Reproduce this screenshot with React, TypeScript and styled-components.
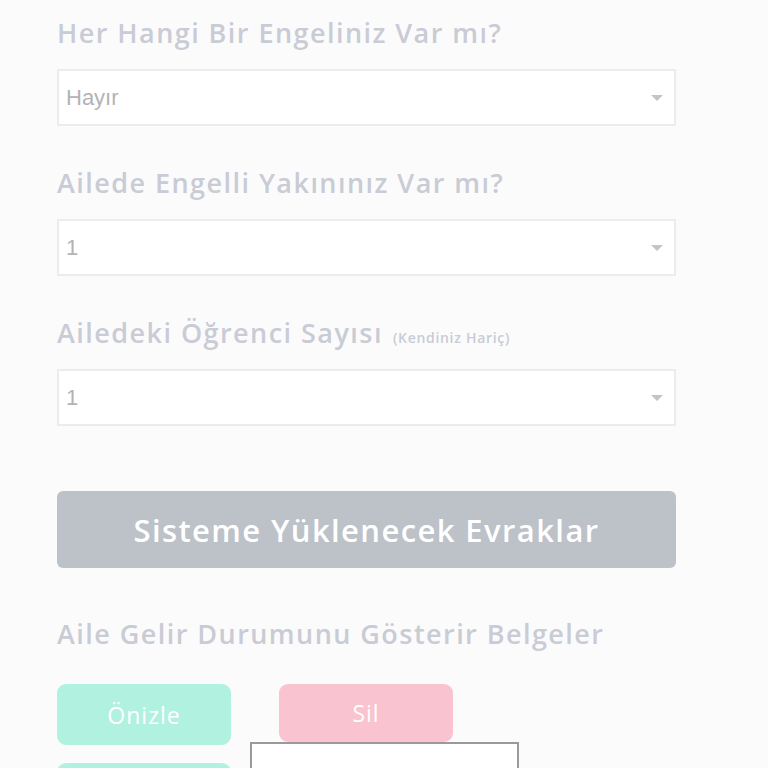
import React from "react"
import styled, { createGlobalStyle } from "styled-components"

const GlobalStyle = createGlobalStyle`
  html, body {
    margin: 0;
    padding: 0;
    background: #fbfbfc;
    overflow: hidden;
  }
`;

const Page = styled.div`
  width: 768px;
  height: 768px;
  overflow: hidden;
  box-sizing: border-box;
  padding: 14px 92px 0 57px;
  display: flex;
  flex-direction: column;
  font-family: "Open Sans", "Noto Sans", sans-serif;
`;

const Field = styled.div`
  display: flex;
  flex-direction: column;
  margin-bottom: 38px;
`;

const Heading = styled.h2`
  margin: 0 0 16px 0;
  height: 39px;
  flex-shrink: 0;
  display: flex;
  align-items: baseline;
  gap: 10px;
  font-size: 27px;
  font-weight: 600;
  letter-spacing: 1.45px;
  color: #c9cbd5;
  white-space: nowrap;
`;

const Hint = styled.span`
  font-size: 14px;
  font-weight: 600;
  letter-spacing: 0.7px;
  color: #c9cbd5;
`;

const SelectBox = styled.div`
  height: 57px;
  box-sizing: border-box;
  border: 2px solid #ececee;
  background: #ffffff;
  display: flex;
  align-items: center;
  justify-content: space-between;
  padding: 0 9px 0 7px;
  font-family: "Liberation Sans", Arial, sans-serif;
  font-size: 22px;
  color: #b3b3b5;
`;

const Caret = styled.span`
  width: 0;
  height: 0;
  border-left: 6px solid transparent;
  border-right: 6px solid transparent;
  border-top: 6px solid #c4c4c6;
  margin-right: 2px;
`;

const Banner = styled.div`
  margin-top: 27px;
  height: 77px;
  flex-shrink: 0;
  border-radius: 6px;
  background: #bdc1c8;
  color: #ffffff;
  display: flex;
  align-items: center;
  justify-content: center;
  font-size: 31px;
  font-weight: 600;
  letter-spacing: 1.4px;
`;

const SubHeading = styled(Heading)`
  margin: 47px 0 30px 0;
`;

const ButtonGrid = styled.div`
  position: relative;
  flex-shrink: 0;
  display: grid;
  grid-template-columns: 174px 174px;
  column-gap: 48px;
  row-gap: 18px;
`;

const ActionButton = styled.div<{ $tone: "preview" | "delete" }>`
  height: ${({ $tone }) => ($tone === "preview" ? "61px" : "58px")};
  border-radius: 9px;
  background: ${({ $tone }) => ($tone === "preview" ? "#b1f1e0" : "#f9c3cf")};
  color: #ffffff;
  display: flex;
  align-items: center;
  justify-content: center;
  font-size: 23px;
  font-weight: 500;
  letter-spacing: 1px;
`;

const FilePopup = styled.div`
  position: absolute;
  left: 193px;
  top: 58px;
  width: 269px;
  height: 60px;
  box-sizing: border-box;
  border: 2px solid #9a9a9a;
  background: #ffffff;
`;

const selects = [
  { label: "Her Hangi Bir Engeliniz Var mı?", value: "Hayır" },
  { label: "Ailede Engelli Yakınınız Var mı?", value: "1" },
  { label: "Ailedeki Öğrenci Sayısı", hint: "(Kendiniz Hariç)", value: "1" },
];

export default function App() {
  return (
    <>
      <GlobalStyle />
      <Page>
        {selects.map((s) => (
          <Field key={s.label}>
            <Heading>
              {s.label}
              {s.hint && <Hint>{s.hint}</Hint>}
            </Heading>
            <SelectBox>
              <span>{s.value}</span>
              <Caret />
            </SelectBox>
          </Field>
        ))}
        <Banner>Sisteme Yüklenecek Evraklar</Banner>
        <SubHeading>Aile Gelir Durumunu Gösterir Belgeler</SubHeading>
        <ButtonGrid>
          <ActionButton $tone="preview">Önizle</ActionButton>
          <ActionButton $tone="delete">Sil</ActionButton>
          <ActionButton $tone="preview" />
          <FilePopup />
        </ButtonGrid>
      </Page>
    </>
  );
}
